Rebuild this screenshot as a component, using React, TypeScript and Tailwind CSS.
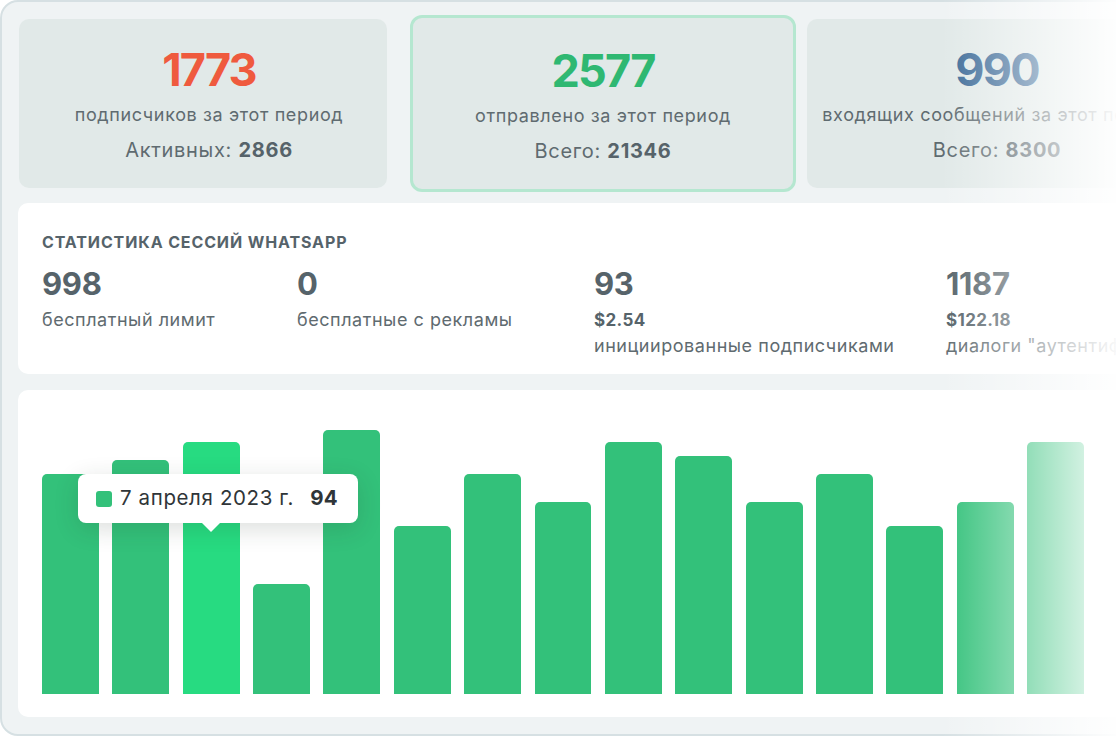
const bars = [220, 234, 252, 110, 264, 168, 220, 192, 252, 238, 192, 220, 168, 192, 252];
const activeBar = 2;

function TopCard({
  value,
  valueColor,
  caption,
  totalLabel,
  total,
  selected,
}: {
  value: string;
  valueColor: string;
  caption: string;
  totalLabel: string;
  total: string;
  selected?: boolean;
}) {
  return (
    <div
      className={
        selected
          ? 'w-[386px] h-[177px] shrink-0 rounded-[12px] border-[3px] border-[#b5e7d0] bg-[#e1e9e8] flex flex-col items-center pt-[30px] overflow-hidden'
          : 'w-[368px] h-[169px] shrink-0 rounded-[10px] bg-[#e1e9e8] flex flex-col items-center pt-[28px] pl-[12px] overflow-hidden'
      }
    >
      <div className={`text-[45px] leading-[45px] font-bold tracking-[-0.04em] ${valueColor}`}>{value}</div>
      <div className="mt-[11px] text-[18px] leading-[24px] tracking-[0.035em] text-[#5f6b70] whitespace-nowrap">
        {caption}
      </div>
      <div className="mt-[10px] text-[20px] leading-[26px] tracking-[0.035em] text-[#5f6b70] whitespace-nowrap">
        {totalLabel} <span className="font-bold text-[#56636a]">{total}</span>
      </div>
    </div>
  );
}

function SessionStat({
  value,
  price,
  label,
  width,
}: {
  value: string;
  price?: string;
  label: string;
  width: string;
}) {
  return (
    <div className={`${width} shrink-0 flex flex-col`}>
      <div className="text-[31px] leading-[36px] font-bold tracking-[-0.01em] text-[#56636a]">{value}</div>
      {price && (
        <div className="mt-[6px] text-[17px] leading-[24px] font-bold tracking-[0.02em] text-[#56636a]">{price}</div>
      )}
      <div
        className={`${price ? 'mt-[2px]' : 'mt-[6px]'} text-[18px] leading-[24px] tracking-[0.03em] text-[#5f6b70] whitespace-nowrap`}
      >
        {label}
      </div>
    </div>
  );
}

export default function App() {
  return (
    <div
      className="relative w-[1116px] h-[736px] overflow-hidden bg-white"
      style={{ fontFamily: 'Inter, "Noto Sans", sans-serif' }}
    >
      <div className="w-[1160px] h-[736px] rounded-[18px] border-2 border-[#d6e0e3] bg-[#eff3f4] pl-[16px] pt-[13px] flex flex-col">
        {/* top cards */}
        <div className="flex items-center h-[177px] ml-[1px]">
          <TopCard
            value="1773"
            valueColor="text-[#ef5a3e]"
            caption="подписчиков за этот период"
            totalLabel="Активных:"
            total="2866"
          />
          <div className="ml-[23px]">
            <TopCard
              value="2577"
              valueColor="text-[#2fb872]"
              caption="отправлено за этот период"
              totalLabel="Всего:"
              total="21346"
              selected
            />
          </div>
          <div className="ml-[11px]">
            <TopCard
              value="990"
              valueColor="text-[#3d6b98]"
              caption="входящих сообщений за этот период"
              totalLabel="Всего:"
              total="8300"
            />
          </div>
        </div>

        {/* session stats */}
        <div className="mt-[11px] h-[171px] rounded-[10px] bg-white pl-[24px] pt-[29px] overflow-hidden">
          <div className="text-[16px] leading-[20px] font-bold uppercase tracking-[0.055em] text-[#56636a]">
            Статистика сессий WhatsApp
          </div>
          <div className="mt-[14px] flex">
            <SessionStat value="998" label="бесплатный лимит" width="w-[255px]" />
            <SessionStat value="0" label="бесплатные с рекламы" width="w-[297px]" />
            <SessionStat value="93" price="$2.54" label="инициированные подписчиками" width="w-[352px]" />
            <SessionStat value="1187" price="$122.18" label='диалоги "аутентификация"' width="w-[300px]" />
          </div>
        </div>

        {/* chart */}
        <div className="mt-[16px] h-[327px] rounded-[10px] bg-white pl-[24px] pb-[23px] flex items-end">
          <div className="relative w-[1042px] h-[280px] flex items-end gap-[13.4px]">
            {bars.map((h, i) => (
              <div
                key={i}
                className={`flex-1 rounded-t-[5px] ${i === activeBar ? 'bg-[#27db81]' : 'bg-[#33c17a]'}`}
                style={{ height: h }}
              />
            ))}

            {/* tooltip */}
            <div className="absolute left-[36px] top-[60px] w-[280px] h-[49px] rounded-[8px] bg-white shadow-[0_6px_24px_rgba(30,50,40,0.16)] flex items-center pl-[18px]">
              <div className="w-[16px] h-[16px] rounded-[3px] bg-[#33c17a]" />
              <div className="ml-[8px] text-[20.5px] tracking-[0.03em] text-[#2f3538] whitespace-nowrap">
                7 апреля 2023 г.
              </div>
              <div className="ml-[16px] text-[20.5px] font-bold tracking-[0.02em] text-[#2f3538]">94</div>
              <div className="absolute left-[124px] -bottom-[9px] w-0 h-0 border-l-[9px] border-r-[9px] border-t-[9px] border-l-transparent border-r-transparent border-t-white" />
            </div>
          </div>
        </div>
      </div>

      {/* right edge fade */}
      <div className="pointer-events-none absolute top-0 right-0 h-full w-[175px] bg-gradient-to-r from-white/0 to-white/95" />
    </div>
  );
}
